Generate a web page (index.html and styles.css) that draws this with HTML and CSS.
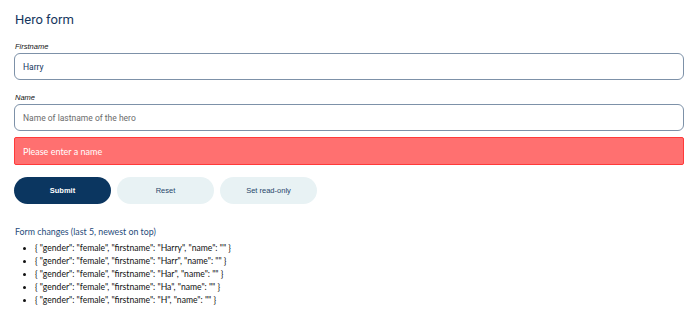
FILE: index.html
```html
<!DOCTYPE html>
<html lang="en">
<head>
    <meta charset="UTF-8">
    <meta name="viewport" content="width=device-width, initial-scale=1.0">
    <title>Hero form</title>
    <link rel="stylesheet" href="styles.css">
</head>
<body>
<div class="page">
    <h1 class="title">Hero form</h1>

    <form class="hero-form">
        <div class="field">
            <label for="firstname">Firstname</label>
            <input type="text" id="firstname" value="Harry">
        </div>
        <div class="field">
            <label for="name">Name</label>
            <input type="text" id="name" placeholder="Name of lastname of the hero">
            <div class="error">Please enter a name</div>
        </div>

        <div class="buttons">
            <button type="button" class="btn primary">Submit</button>
            <button type="button" class="btn secondary">Reset</button>
            <button type="button" class="btn secondary">Set read-only</button>
        </div>
    </form>

    <h2 class="changes-title">Form changes (last 5, newest on top)</h2>
    <ul class="changes">
        <li>{ "gender": "female", "firstname": "Harry", "name": "" }</li>
        <li>{ "gender": "female", "firstname": "Harr", "name": "" }</li>
        <li>{ "gender": "female", "firstname": "Har", "name": "" }</li>
        <li>{ "gender": "female", "firstname": "Ha", "name": "" }</li>
        <li>{ "gender": "female", "firstname": "H", "name": "" }</li>
    </ul>
</div>
</body>
</html>
```

FILE: styles.css
```css
body {
    margin: 0;
    padding: 0;
    background: #ffffff;
    font-family: Roboto, "Liberation Sans", sans-serif;
    color: #222;
}

.page {
    padding: 11px 16px 0 14px;
}

/* Title */
.title {
    margin: 0 0 0 1px;
    font-size: 13px;
    font-weight: 400;
    line-height: 18px;
    color: #14365e;
}

/* Form */
.hero-form {
    margin-top: 13px;
}

.field {
    display: flex;
    flex-direction: column;
    margin-bottom: 13px;
}

.field label {
    font-family: "Liberation Sans", Arial, sans-serif;
    font-style: italic;
    font-size: 7.5px;
    line-height: 10px;
    color: #111;
    margin-bottom: 1px;
    padding-left: 1px;
}

.field input {
    height: 27px;
    box-sizing: border-box;
    border: 1px solid #7d91a8;
    border-radius: 6px;
    padding: 0 0 0 8px;
    font-family: Roboto, "Liberation Sans", sans-serif;
    font-size: 8.5px;
    color: #14365e;
    outline: none;
}

.field input::placeholder {
    color: #6b6b6b;
}

.error {
    margin-top: 6px;
    height: 28px;
    box-sizing: border-box;
    background: #ff7070;
    border: 1px solid #ff3a3a;
    border-radius: 2px;
    padding: 0 0 0 8px;
    display: flex;
    align-items: center;
    font-family: Lato, "Liberation Sans", sans-serif;
    font-size: 9px;
    color: #ffffff;
}

.buttons {
    display: flex;
    gap: 6px;
    margin-top: -1px;
}

.btn {
    width: 97px;
    height: 27px;
    border: none;
    border-radius: 14px;
    font-family: "Liberation Sans", Arial, sans-serif;
    font-size: 7.5px;
    cursor: pointer;
}

.primary {
    background: #0b3660;
    color: #ffffff;
    font-weight: bold;
}

.secondary {
    background: #e8f2f4;
    color: #27466a;
}

/* Changes list */
.changes-title {
    margin: 21px 0 0 1px;
    font-family: Lato, "Liberation Sans", sans-serif;
    font-size: 8.8px;
    font-weight: 400;
    line-height: 14px;
    color: #1f4b7a;
}

.changes {
    margin: 3px 0 0;
    padding-left: 21px;
    font-family: Lato, "Liberation Sans", sans-serif;
    font-size: 8.6px;
    line-height: 13px;
    color: #111;
}
```
